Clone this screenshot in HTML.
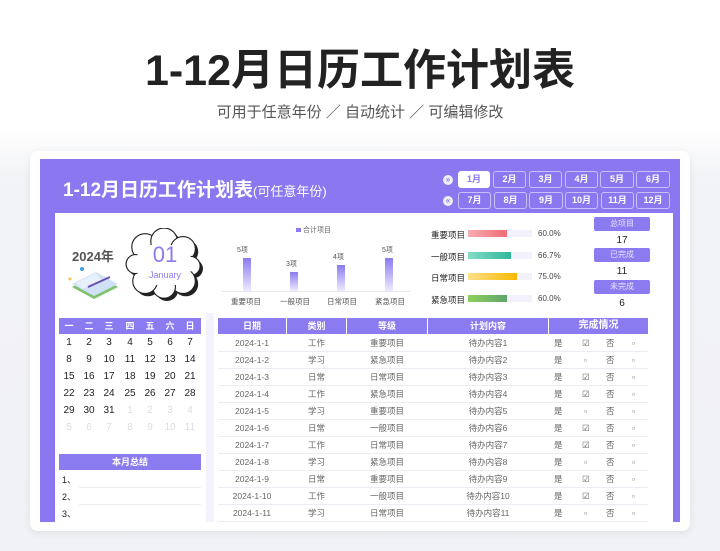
<!DOCTYPE html>
<html><head><meta charset="utf-8"><style>
*{margin:0;padding:0;box-sizing:border-box}
body{width:720px;height:551px;overflow:hidden;background:linear-gradient(#fff 0,#fff 130px,#f2f3f6 180px,#f1f2f5 100%);font-family:"Liberation Sans","Noto Sans CJK SC",sans-serif;position:relative;color:#333}
.a{position:absolute}
.c{text-align:center}
.btn{position:absolute;height:17px;border:1px solid #c9c0fa;border-radius:3px;color:#fff;font-size:9px;font-weight:bold;text-align:center;line-height:15px}
.hd{background:#8b7bf0;color:#fff;font-size:9px;font-weight:bold;text-align:center;line-height:16px}
.cal span{position:absolute;width:20px;text-align:center;font-size:10px;color:#222}
.row{position:absolute;left:218px;width:430px;height:17px;border-bottom:1px solid #ececf2;font-size:8.5px;color:#666;line-height:17px}
.row span{position:absolute;text-align:center}
.box{position:absolute;left:594px;width:56px;height:14px;background:#8b7bf0;border-radius:2px;color:#e8e4ff;font-size:8px;text-align:center;line-height:14px}
.num{position:absolute;left:594px;width:56px;text-align:center;font-size:10px;color:#222}
.pl{position:absolute;width:60px;text-align:right;font-size:8.5px;color:#222;left:405px}
.tr{position:absolute;left:468px;width:64px;height:7px;background:#f3f2fc}
.pc{position:absolute;left:538px;font-size:8px;color:#444}
</style></head><body>
<div class="a c" style="left:0;top:36px;width:720px;font-size:43px;font-weight:bold;color:#222">1-12月日历工作计划表</div>
<div class="a c" style="left:0;top:101px;width:720px;font-size:15px;color:#555">可用于任意年份 ／ 自动统计 ／ 可编辑修改</div>

<div class="a" style="left:30px;top:151px;width:660px;height:380px;background:#fff;border-radius:8px;box-shadow:0 2px 8px rgba(0,0,0,.08)"></div>
<div class="a" style="left:40px;top:159px;width:640px;height:363px;background:#8b78f0"></div>
<div class="a" style="left:55px;top:213px;width:618px;height:309px;background:#fff"></div>
<div class="a" style="left:206px;top:313px;width:8px;height:209px;background:#f4f2fd"></div>

<div class="a" style="left:63px;top:175px;color:#fff;font-size:19px;font-weight:bold">1-12月日历工作计划表<span style="font-size:13px;font-weight:normal">(可任意年份)</span></div>

<div class="a" style="left:443px;top:175px;width:10px;height:10px;border-radius:50%;background:#eee;color:#8b7bf0;font-size:8px;line-height:10px;text-align:center;font-weight:bold">»</div>
<div class="a" style="left:443px;top:196px;width:10px;height:10px;border-radius:50%;background:#eee;color:#8b7bf0;font-size:8px;line-height:10px;text-align:center;font-weight:bold">«</div>
<div class="btn" style="left:458px;top:171px;width:32px;background:#fff;color:#8b7bf0;border-color:#fff">1月</div>
<div class="btn" style="left:493px;top:171px;width:33px">2月</div>
<div class="btn" style="left:529px;top:171px;width:33px">3月</div>
<div class="btn" style="left:565px;top:171px;width:33px">4月</div>
<div class="btn" style="left:600px;top:171px;width:34px">5月</div>
<div class="btn" style="left:636px;top:171px;width:34px">6月</div>
<div class="btn" style="left:458px;top:192px;width:33px">7月</div>
<div class="btn" style="left:494px;top:192px;width:33px">8月</div>
<div class="btn" style="left:529px;top:192px;width:34px">9月</div>
<div class="btn" style="left:565px;top:192px;width:33px">10月</div>
<div class="btn" style="left:601px;top:192px;width:33px">11月</div>
<div class="btn" style="left:636px;top:192px;width:34px">12月</div>

<div class="a" style="left:72px;top:246px;font-size:13px;font-weight:bold;color:#555">2024年</div>
<svg class="a" style="left:66px;top:265px" width="60" height="40" viewBox="0 0 60 40">
<polygon points="6,22 30,10 52,22 28,34" fill="#7cc36c"/>
<polygon points="6,19 30,7 52,19 28,31" fill="#cfe0f7"/>
<polygon points="10,18 30,8 36,16 16,24" fill="#e8f0fb"/>
<line x1="22" y1="22" x2="44" y2="12" stroke="#6a4fb0" stroke-width="2"/>
<circle cx="16" cy="4" r="2" fill="#3aa0e0"/><circle cx="4" cy="14" r="1.5" fill="#f5c242"/>
</svg>
<svg class="a" style="left:124px;top:228px" width="82" height="74" viewBox="0 0 86 78">
<g fill="#222" transform="translate(3,3)">
<circle cx="22" cy="20" r="14"/><circle cx="42" cy="14" r="14"/><circle cx="62" cy="22" r="13"/><circle cx="70" cy="40" r="10"/><circle cx="62" cy="56" r="13"/><circle cx="42" cy="62" r="12"/><circle cx="22" cy="56" r="13"/><circle cx="12" cy="38" r="10"/><rect x="16" y="18" width="52" height="42"/></g>
<g fill="#fff" stroke="#222" stroke-width="1.2">
<circle cx="22" cy="20" r="14"/><circle cx="42" cy="14" r="14"/><circle cx="62" cy="22" r="13"/><circle cx="70" cy="40" r="10"/><circle cx="62" cy="56" r="13"/><circle cx="42" cy="62" r="12"/><circle cx="22" cy="56" r="13"/><circle cx="12" cy="38" r="10"/></g>
<rect x="14" y="18" width="56" height="42" fill="#fff"/>
</svg>
<div class="a c" style="left:135px;top:242px;width:60px;font-size:22px;color:#8b7bf0">01</div>
<div class="a c" style="left:135px;top:270px;width:60px;font-size:9px;color:#8b7bf0">January</div>

<div class="a" style="left:296px;top:225px;font-size:7px;color:#666"><span style="display:inline-block;width:5px;height:4px;background:#8b7bf0;margin-right:2px"></span>合计项目</div>
<div class="a" style="left:222px;top:291px;width:188px;height:1px;background:#e6e6ec"></div>
<div class="a" style="left:243px;top:258px;width:8px;height:33px;background:linear-gradient(#8b7bf0,#eeeaff)"></div>
<div class="a" style="left:290px;top:272px;width:8px;height:19px;background:linear-gradient(#8b7bf0,#eeeaff)"></div>
<div class="a" style="left:337px;top:265px;width:8px;height:26px;background:linear-gradient(#8b7bf0,#eeeaff)"></div>
<div class="a" style="left:385px;top:258px;width:8px;height:33px;background:linear-gradient(#8b7bf0,#eeeaff)"></div>
<div class="a" style="left:237px;top:245px;font-size:7px;color:#555">5项</div>
<div class="a" style="left:286px;top:259px;font-size:7px;color:#555">3项</div>
<div class="a" style="left:333px;top:252px;font-size:7px;color:#555">4项</div>
<div class="a" style="left:382px;top:245px;font-size:7px;color:#555">5项</div>
<div class="a" style="left:231px;top:296px;font-size:7.5px;color:#555">重要项目</div>
<div class="a" style="left:280px;top:296px;font-size:7.5px;color:#555">一般项目</div>
<div class="a" style="left:327px;top:296px;font-size:7.5px;color:#555">日常项目</div>
<div class="a" style="left:375px;top:296px;font-size:7.5px;color:#555">紧急项目</div>

<div class="pl" style="top:229px">重要项目</div><div class="tr" style="top:230px"></div><div class="a" style="left:468px;top:230px;width:39px;height:7px;background:linear-gradient(90deg,#f8aeb3,#ef6c73)"></div><div class="pc" style="top:229px">60.0%</div>
<div class="pl" style="top:251px">一般项目</div><div class="tr" style="top:252px"></div><div class="a" style="left:468px;top:252px;width:43px;height:7px;background:linear-gradient(90deg,#86dcc6,#2fb89a)"></div><div class="pc" style="top:251px">66.7%</div>
<div class="pl" style="top:272px">日常项目</div><div class="tr" style="top:273px"></div><div class="a" style="left:468px;top:273px;width:49px;height:7px;background:linear-gradient(90deg,#fde08a,#f8b800)"></div><div class="pc" style="top:272px">75.0%</div>
<div class="pl" style="top:294px">紧急项目</div><div class="tr" style="top:295px"></div><div class="a" style="left:468px;top:295px;width:39px;height:7px;background:linear-gradient(90deg,#8fd05c,#5fa56a)"></div><div class="pc" style="top:294px">60.0%</div>

<div class="box" style="top:217px">总项目</div><div class="num" style="top:235px">17</div>
<div class="box" style="top:248px">已完成</div><div class="num" style="top:266px">11</div>
<div class="box" style="top:280px">未完成</div><div class="num" style="top:298px">6</div>

<div class="a hd" style="left:59px;top:318px;width:142px;height:16px">
<div class="cal" style="position:relative">
<span style="left:0;color:#fff;font-size:9px;top:0">一</span><span style="left:20px;color:#fff;font-size:9px">二</span><span style="left:40px;color:#fff;font-size:9px">三</span><span style="left:61px;color:#fff;font-size:9px">四</span><span style="left:81px;color:#fff;font-size:9px">五</span><span style="left:101px;color:#fff;font-size:9px">六</span><span style="left:121px;color:#fff;font-size:9px">日</span></div></div>
<div class="a cal" style="left:59px;top:337px;width:142px;height:100px">
<span style="left:0;top:0">1</span><span style="left:20px;top:0">2</span><span style="left:40px;top:0">3</span><span style="left:61px;top:0">4</span><span style="left:81px;top:0">5</span><span style="left:101px;top:0">6</span><span style="left:121px;top:0">7</span>
<span style="left:0;top:17px">8</span><span style="left:20px;top:17px">9</span><span style="left:40px;top:17px">10</span><span style="left:61px;top:17px">11</span><span style="left:81px;top:17px">12</span><span style="left:101px;top:17px">13</span><span style="left:121px;top:17px">14</span>
<span style="left:0;top:34px">15</span><span style="left:20px;top:34px">16</span><span style="left:40px;top:34px">17</span><span style="left:61px;top:34px">18</span><span style="left:81px;top:34px">19</span><span style="left:101px;top:34px">20</span><span style="left:121px;top:34px">21</span>
<span style="left:0;top:51px">22</span><span style="left:20px;top:51px">23</span><span style="left:40px;top:51px">24</span><span style="left:61px;top:51px">25</span><span style="left:81px;top:51px">26</span><span style="left:101px;top:51px">27</span><span style="left:121px;top:51px">28</span>
<span style="left:0;top:68px">29</span><span style="left:20px;top:68px">30</span><span style="left:40px;top:68px">31</span><span style="left:61px;top:68px;color:#ddd">1</span><span style="left:81px;top:68px;color:#ddd">2</span><span style="left:101px;top:68px;color:#ddd">3</span><span style="left:121px;top:68px;color:#ddd">4</span>
<span style="left:0;top:85px;color:#ddd">5</span><span style="left:20px;top:85px;color:#ddd">6</span><span style="left:40px;top:85px;color:#ddd">7</span><span style="left:61px;top:85px;color:#ddd">8</span><span style="left:81px;top:85px;color:#ddd">9</span><span style="left:101px;top:85px;color:#ddd">10</span><span style="left:121px;top:85px;color:#ddd">11</span>
</div>
<div class="a hd" style="left:59px;top:454px;width:142px;height:16px">本月总结</div>
<div class="a" style="left:62px;top:473px;font-size:9px;color:#222">1、</div>
<div class="a" style="left:62px;top:490px;font-size:9px;color:#222">2、</div>
<div class="a" style="left:62px;top:507px;font-size:9px;color:#222">3、</div>
<div class="a" style="left:79px;top:487px;width:122px;height:1px;background:#eee"></div>
<div class="a" style="left:79px;top:504px;width:122px;height:1px;background:#eee"></div>

<div class="a hd" style="left:218px;top:318px;width:68px;height:16px">日期</div>
<div class="a hd" style="left:287px;top:318px;width:59px;height:16px">类别</div>
<div class="a hd" style="left:347px;top:318px;width:80px;height:16px">等级</div>
<div class="a hd" style="left:428px;top:318px;width:120px;height:16px">计划内容</div>
<div class="a hd" style="left:549px;top:318px;width:99px;height:16px;font-size:10px">完成情况</div>

<div class="row" style="top:335px"><span style="left:0;width:68px">2024-1-1</span><span style="left:69px;width:59px">工作</span><span style="left:129px;width:80px">重要项目</span><span style="left:210px;width:120px">待办内容1</span><span style="left:336px">是</span><span style="left:364px">☑</span><span style="left:388px">否</span><span style="left:414px">▫</span></div>
<div class="row" style="top:352px"><span style="left:0;width:68px">2024-1-2</span><span style="left:69px;width:59px">学习</span><span style="left:129px;width:80px">紧急项目</span><span style="left:210px;width:120px">待办内容2</span><span style="left:336px">是</span><span style="left:366px">▫</span><span style="left:388px">否</span><span style="left:414px">▫</span></div>
<div class="row" style="top:369px"><span style="left:0;width:68px">2024-1-3</span><span style="left:69px;width:59px">日常</span><span style="left:129px;width:80px">日常项目</span><span style="left:210px;width:120px">待办内容3</span><span style="left:336px">是</span><span style="left:364px">☑</span><span style="left:388px">否</span><span style="left:414px">▫</span></div>
<div class="row" style="top:386px"><span style="left:0;width:68px">2024-1-4</span><span style="left:69px;width:59px">工作</span><span style="left:129px;width:80px">紧急项目</span><span style="left:210px;width:120px">待办内容4</span><span style="left:336px">是</span><span style="left:364px">☑</span><span style="left:388px">否</span><span style="left:414px">▫</span></div>
<div class="row" style="top:403px"><span style="left:0;width:68px">2024-1-5</span><span style="left:69px;width:59px">学习</span><span style="left:129px;width:80px">重要项目</span><span style="left:210px;width:120px">待办内容5</span><span style="left:336px">是</span><span style="left:366px">▫</span><span style="left:388px">否</span><span style="left:414px">▫</span></div>
<div class="row" style="top:420px"><span style="left:0;width:68px">2024-1-6</span><span style="left:69px;width:59px">日常</span><span style="left:129px;width:80px">一般项目</span><span style="left:210px;width:120px">待办内容6</span><span style="left:336px">是</span><span style="left:364px">☑</span><span style="left:388px">否</span><span style="left:414px">▫</span></div>
<div class="row" style="top:437px"><span style="left:0;width:68px">2024-1-7</span><span style="left:69px;width:59px">工作</span><span style="left:129px;width:80px">日常项目</span><span style="left:210px;width:120px">待办内容7</span><span style="left:336px">是</span><span style="left:364px">☑</span><span style="left:388px">否</span><span style="left:414px">▫</span></div>
<div class="row" style="top:454px"><span style="left:0;width:68px">2024-1-8</span><span style="left:69px;width:59px">学习</span><span style="left:129px;width:80px">紧急项目</span><span style="left:210px;width:120px">待办内容8</span><span style="left:336px">是</span><span style="left:366px">▫</span><span style="left:388px">否</span><span style="left:414px">▫</span></div>
<div class="row" style="top:471px"><span style="left:0;width:68px">2024-1-9</span><span style="left:69px;width:59px">日常</span><span style="left:129px;width:80px">重要项目</span><span style="left:210px;width:120px">待办内容9</span><span style="left:336px">是</span><span style="left:364px">☑</span><span style="left:388px">否</span><span style="left:414px">▫</span></div>
<div class="row" style="top:488px"><span style="left:0;width:68px">2024-1-10</span><span style="left:69px;width:59px">工作</span><span style="left:129px;width:80px">一般项目</span><span style="left:210px;width:120px">待办内容10</span><span style="left:336px">是</span><span style="left:364px">☑</span><span style="left:388px">否</span><span style="left:414px">▫</span></div>
<div class="row" style="top:505px"><span style="left:0;width:68px">2024-1-11</span><span style="left:69px;width:59px">学习</span><span style="left:129px;width:80px">日常项目</span><span style="left:210px;width:120px">待办内容11</span><span style="left:336px">是</span><span style="left:366px">▫</span><span style="left:388px">否</span><span style="left:414px">▫</span></div>
</body></html>
